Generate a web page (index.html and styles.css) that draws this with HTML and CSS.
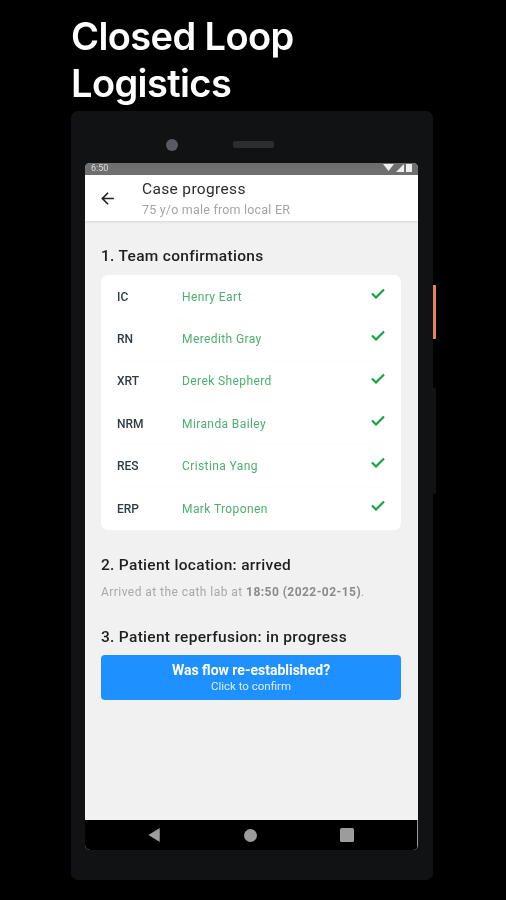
FILE: index.html
```html
<!DOCTYPE html>
<html lang="en">
<head>
  <meta charset="UTF-8">
  <meta name="viewport" content="width=device-width, initial-scale=1.0">
  <title>Closed Loop Logistics</title>
  <link rel="stylesheet" href="styles.css">
</head>
<body>
  <h1 class="headline">Closed Loop<br>Logistics</h1>

  <div class="phone">
    <div class="side-key side-key-power"></div>
    <div class="side-key side-key-volume"></div>

    <div class="phone-top">
      <span class="camera"></span>
      <span class="speaker"></span>
    </div>

    <div class="screen">
      <div class="status-bar">
        <span class="status-time">6:50</span>
        <span class="status-icons">
          <svg viewBox="0 0 11 7" width="11" height="7"><path d="M0 0h11L5.5 7z"/></svg>
          <svg viewBox="0 0 8 8" width="8" height="8"><path d="M0 8L8 0v8z"/></svg>
          <svg viewBox="0 0 6 8" width="6" height="8"><path d="M0 0h6v8H0z"/></svg>
        </span>
      </div>

      <header class="app-bar">
        <svg class="back-icon" viewBox="0 0 24 24" width="19" height="19">
          <path d="M20 11H7.83l5.59-5.59L12 4l-8 8 8 8 1.41-1.41L7.83 13H20z"/>
        </svg>
        <div class="app-bar-text">
          <div class="app-bar-title">Case progress</div>
          <div class="app-bar-sub">75 y/o male from local ER</div>
        </div>
      </header>

      <main class="content">
        <h2 class="section-title first">1. Team confirmations</h2>
        <div class="team-card">
          <div class="team-row"><span class="role">IC</span><span class="person">Henry Eart</span><svg class="check" viewBox="0 0 14 11"><path d="M1 5.5l4 4L13 1.5"/></svg></div>
          <div class="team-row"><span class="role">RN</span><span class="person">Meredith Gray</span><svg class="check" viewBox="0 0 14 11"><path d="M1 5.5l4 4L13 1.5"/></svg></div>
          <div class="team-row"><span class="role">XRT</span><span class="person">Derek Shepherd</span><svg class="check" viewBox="0 0 14 11"><path d="M1 5.5l4 4L13 1.5"/></svg></div>
          <div class="team-row"><span class="role">NRM</span><span class="person">Miranda Bailey</span><svg class="check" viewBox="0 0 14 11"><path d="M1 5.5l4 4L13 1.5"/></svg></div>
          <div class="team-row"><span class="role">RES</span><span class="person">Cristina Yang</span><svg class="check" viewBox="0 0 14 11"><path d="M1 5.5l4 4L13 1.5"/></svg></div>
          <div class="team-row"><span class="role">ERP</span><span class="person">Mark Troponen</span><svg class="check" viewBox="0 0 14 11"><path d="M1 5.5l4 4L13 1.5"/></svg></div>
        </div>

        <h2 class="section-title second">2. Patient location: arrived</h2>
        <p class="arrived">Arrived at the cath lab at <strong>18:50 (2022-02-15)</strong>.</p>

        <h2 class="section-title third">3. Patient reperfusion: in progress</h2>
        <button class="confirm-btn">
          <span class="confirm-title">Was flow re-established?</span>
          <span class="confirm-sub">Click to confirm</span>
        </button>
      </main>

      <nav class="nav-bar">
        <svg viewBox="0 0 14 16" width="13" height="14"><path d="M13 0v16L0 8z"/></svg>
        <svg viewBox="0 0 14 14" width="13" height="13"><circle cx="7" cy="7" r="7"/></svg>
        <svg viewBox="0 0 14 14" width="14" height="14"><rect width="14" height="14" rx="1.5"/></svg>
      </nav>
    </div>
  </div>
</body>
</html>
```

FILE: styles.css
```css
* {
  margin: 0;
  padding: 0;
  box-sizing: border-box;
}

body {
  width: 506px;
  height: 900px;
  overflow: hidden;
  background: #000;
  font-family: Roboto, "Liberation Sans", sans-serif;
  padding: 13px 0 0 71px;
}

.headline {
  color: #fff;
  font-family: Inter, Roboto, sans-serif;
  font-size: 38px;
  line-height: 47px;
  font-weight: 600;
  letter-spacing: -0.6px;
  height: 98px;
  filter: blur(0.5px);
}

/* the source is a scaled-down video frame, everything in it is a bit soft */
.phone {
  position: relative;
  width: 362px;
  height: 769px;
  background: #111214;
  border-radius: 7px;
  padding: 0 15px 30px 14px;
  filter: blur(0.6px);
}

.side-key {
  position: absolute;
  left: 362px;
  width: 3px;
  border-radius: 0 1px 1px 0;
}

.side-key-power {
  top: 174px;
  height: 54px;
  background: #e8806a;
}

.side-key-volume {
  top: 277px;
  height: 106px;
  background: #111214;
}

.phone-top {
  height: 52px;
  display: flex;
  align-items: center;
  padding: 15px 0 0 81px;
  gap: 55px;
}

.camera {
  width: 12px;
  height: 12px;
  border-radius: 50%;
  background: #5a5b62;
}

.speaker {
  width: 41px;
  height: 7px;
  border-radius: 2px;
  background: #2c2d30;
}

.screen {
  height: 687px;
  display: flex;
  flex-direction: column;
  border-radius: 5px;
  overflow: hidden;
  background: #f1f1f1;
}

.status-bar {
  height: 12px;
  flex-shrink: 0;
  background: #6f6f6f;
  display: flex;
  justify-content: space-between;
  align-items: flex-start;
  padding: 0 6px;
  color: #ddd;
  font-size: 9px;
  line-height: 10px;
}

.status-icons {
  display: flex;
  gap: 2px;
  margin-top: 1px;
}

.status-icons svg {
  fill: #eee;
  display: block;
}

.app-bar {
  height: 46px;
  flex-shrink: 0;
  background: #fff;
  display: flex;
  align-items: center;
  padding-left: 13px;
  box-shadow: 0 1px 2px rgba(0, 0, 0, 0.12);
  position: relative;
}

.back-icon {
  fill: #222;
  flex-shrink: 0;
}

.app-bar-text {
  margin-left: 25px;
}

.app-bar-title {
  font-size: 15.5px;
  line-height: 21px;
  color: #2b2b2b;
  letter-spacing: 0.35px;
  margin-top: 1px;
}

.app-bar-sub {
  font-size: 12.5px;
  line-height: 16px;
  color: #a5a5a5;
  letter-spacing: 0.2px;
  margin-top: 2px;
}

.content {
  flex: 1;
  padding: 0 17px 0 16px;
}

.section-title {
  font-size: 15.5px;
  line-height: 20px;
  font-weight: 500;
  color: #1f1f1f;
  letter-spacing: 0.3px;
}

.section-title.first {
  margin-top: 25px;
}

.section-title.second {
  margin-top: 25px;
}

.section-title.third {
  margin-top: 27px;
}

.team-card {
  margin-top: 9px;
  height: 255px;
  background: #fff;
  border-radius: 7px;
  padding: 1px 16px 0;
  display: grid;
  grid-template-rows: repeat(6, 1fr);
}

.team-row {
  display: flex;
  align-items: center;
  font-size: 12px;
  border-bottom: 1px solid #fbfbfb;
}

.team-row:last-child {
  border-bottom: 0;
}

.role {
  width: 65px;
  color: #2f3d43;
  font-weight: 500;
}

.person {
  flex: 1;
  color: #4caf6d;
  letter-spacing: 0.4px;
}

.check {
  width: 14px;
  height: 11px;
  fill: none;
  stroke: #17a244;
  stroke-width: 2.2;
  margin: -6px 0 0 0;
}

.arrived {
  margin-top: 9px;
  font-size: 12px;
  line-height: 16px;
  color: #a8a8a8;
  letter-spacing: 0.45px;
}

.arrived strong {
  font-weight: 700;
  color: #8b8b8b;
}

.confirm-btn {
  display: flex;
  flex-direction: column;
  align-items: center;
  justify-content: center;
  width: 100%;
  height: 45px;
  margin-top: 8px;
  border: none;
  border-radius: 4px;
  background: #1e90ff;
  color: #fff;
  font-family: inherit;
}

.confirm-title {
  font-size: 14px;
  line-height: 18px;
  font-weight: 700;
}

.confirm-sub {
  font-size: 11.5px;
  line-height: 15px;
  color: #dbeeff;
}

.nav-bar {
  height: 30px;
  flex-shrink: 0;
  background: #000;
  border-right: 1px solid #9a9a9a;
  display: flex;
  align-items: center;
  justify-content: center;
  gap: 83px;
}

.nav-bar svg {
  fill: #9c9c9c;
  display: block;
}
```
